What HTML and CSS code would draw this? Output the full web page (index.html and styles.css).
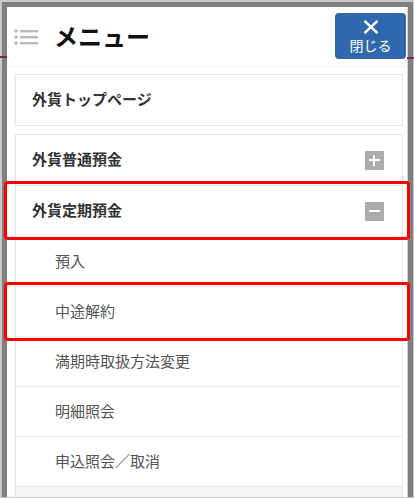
FILE: index.html
```html
<!DOCTYPE html>
<html lang="ja">
<head>
    <meta charset="UTF-8">
    <meta name="viewport" content="width=device-width, initial-scale=1.0">
    <title>メニュー</title>
    <link rel="stylesheet" href="styles.css">
</head>
<body>
    <div class="frame">
        <div class="panel">
            <div class="header">
                <svg class="list-icon" width="24" height="16" viewBox="0 0 24 16">
                    <circle cx="2" cy="2" r="1.8" fill="#bbb"/>
                    <circle cx="2" cy="8" r="1.8" fill="#bbb"/>
                    <circle cx="2" cy="14" r="1.8" fill="#bbb"/>
                    <rect x="6" y="1" width="18" height="2.4" fill="#bbb"/>
                    <rect x="6" y="7" width="18" height="2.4" fill="#bbb"/>
                    <rect x="6" y="13" width="18" height="2.4" fill="#bbb"/>
                </svg>
                <h1 class="title">メニュー</h1>
                <button class="close-btn">
                    <svg width="16" height="14" viewBox="0 0 16 14">
                        <path d="M1.5 0.8 L14.5 13.2 M14.5 0.8 L1.5 13.2" stroke="#fff" stroke-width="2.4"/>
                    </svg>
                    <span>閉じる</span>
                </button>
            </div>

            <div class="menu-box">
                <div class="row main">外貨トップページ</div>
            </div>

            <div class="menu-box group">
                <div class="row main">外貨普通預金<span class="toggle plus"></span></div>
                <div class="row main">外貨定期預金<span class="toggle"></span></div>
                <div class="row sub">預入</div>
                <div class="row sub">中途解約</div>
                <div class="row sub">満期時取扱方法変更</div>
                <div class="row sub">明細照会</div>
                <div class="row sub">申込照会／取消</div>
                <div class="row main shaded"></div>
            </div>
        </div>
    </div>

    <!-- annotation frames over the menu -->
    <div class="mark mark-1"></div>
    <div class="mark mark-2"></div>
</body>
</html>
```

FILE: styles.css
```css
body {
    margin: 0;
    height: 498px;
    overflow: hidden;
    background: #c9c9c9;
    font-family: "Noto Sans CJK JP", "Noto Sans", sans-serif;
    position: relative;
}
body::before, body::after {
    content: "";
    position: absolute;
    width: 7px;
    height: 2px;
    background: #7a2350;
}
body::before {
    left: 0;
    top: 56px;
}
body::after {
    right: 0;
    top: 57px;
}
.frame {
    margin: 2px 1px 0 2px;
    padding: 5px 5px 0 5px;
    height: 495px;
    box-sizing: border-box;
    background: #7f7f7f;
}
.panel {
    height: 100%;
    background: #fff;
    border-right: 1px solid #d4d4d4;
    overflow: hidden;
}
.header {
    height: 59px;
    border-bottom: 1px solid #eee;
    display: flex;
    align-items: center;
    padding-left: 7px;
}
.list-icon {
    display: block;
}
.title {
    margin: 0 0 2px 16px;
    font-size: 24px;
    font-weight: bold;
    color: #111;
    line-height: 1;
}
.close-btn {
    margin: 6px 1px 0 auto;
    align-self: flex-start;
    width: 71px;
    height: 46px;
    border: none;
    border-radius: 4px;
    background: #3068ad;
    color: #fff;
    font-family: inherit;
    font-size: 14px;
    padding: 7px 0 0;
    display: flex;
    flex-direction: column;
    align-items: center;
    line-height: 1;
}
.close-btn svg {
    display: block;
    margin-bottom: 4px;
}
.menu-box {
    margin: 7px 4px 0 8px;
    border: 1px solid #e6e6e6;
}
.group {
    margin-top: 8px;
}
.row {
    height: 47px;
    padding-bottom: 3px;
    display: flex;
    align-items: center;
    font-size: 15px;
    border-top: 1px solid #e6e6e6;
}
.row:first-child {
    border-top: none;
}
.main {
    padding-left: 16px;
    padding-right: 18px;
    font-weight: bold;
    color: #333;
}
.sub {
    height: 46px;
    padding-left: 39px;
    color: #555;
    border-top-color: #ececec;
}
.shaded {
    background: #f6f6f6;
}
.toggle {
    margin-left: auto;
    margin-top: 3px;
    width: 19px;
    height: 19px;
    background: #acacac;
    position: relative;
}
.toggle::before, .plus::after {
    content: "";
    position: absolute;
    background: #fff;
}
.toggle::before {
    left: 4px;
    top: 8px;
    width: 11px;
    height: 2px;
}
.plus::after {
    left: 8px;
    top: 4px;
    width: 2px;
    height: 11px;
}
.mark {
    position: absolute;
    left: 4px;
    width: 406px;
    height: 59px;
    border: 3px solid #f00;
    border-radius: 4px;
    box-sizing: border-box;
}
.mark-1 {
    top: 181px;
}
.mark-2 {
    top: 282px;
}
```
